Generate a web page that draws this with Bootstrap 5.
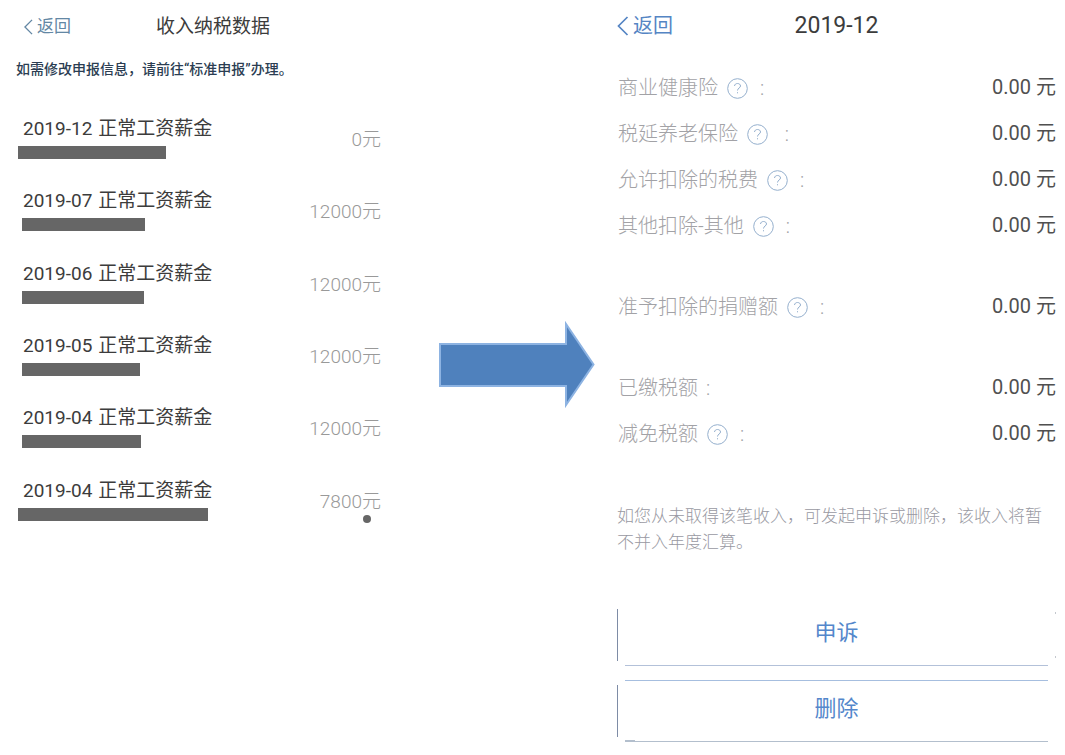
<!DOCTYPE html>
<html lang="zh-CN">
<head>
<meta charset="utf-8">
<meta name="viewport" content="width=device-width, initial-scale=1">
<title>收入纳税数据</title>
<link href="https://cdn.jsdelivr.net/npm/bootstrap@5.3.0/dist/css/bootstrap.min.css" rel="stylesheet">
<script src="https://cdn.jsdelivr.net/npm/bootstrap@5.3.0/dist/js/bootstrap.bundle.min.js" defer></script>
<style>
  body { font-family: Roboto, "Noto Sans CJK SC", sans-serif; color: #3c3c3c; background: #fff; }
  .flow { display: grid; grid-template-columns: minmax(0, 365fr) 236px minmax(0, 439fr); padding: 0 9px 0 16px; }
  .screen-head { height: 54px; }
  .screen-head h1 { font-size: 19px; line-height: 26px; font-weight: 400; }
  .back { display: flex; align-items: center; gap: 4px; text-decoration: none; white-space: nowrap; }
  .back-income { width: 132px; font-size: 17px; color: #6387a4; }
  .back-detail { font-size: 20px; color: #5585c4; }
  .notice { font-size: 14px; line-height: 22px; font-weight: 500; color: #2b3d52; white-space: nowrap; margin-top: 4px; }

  .income { margin-top: 36px; min-height: 436px; font-size: 19px; line-height: 26px; }
  .income .period { display: flex; gap: 6px; padding-left: 7px; }
  .income .amount { color: #999; font-weight: 300; margin-top: 11px; }
  .redacted { height: 13px; margin: 4px 0 0 6px; background: #666; }
  .redacted-wide { margin-left: 2px; }
  .dot { width: 8px; height: 8px; margin-right: 10px; background: #666; }

  .arrow-col { padding: 321px 22px 0 58px; }

  .detail-head { display: grid; grid-template-columns: 1fr auto 1fr; align-items: center; height: 52px; }
  .detail-head h2 { font-size: 23px; line-height: 28px; font-weight: 400; }
  .detail { font-size: 20px; line-height: 28px; margin-top: 13px; }
  .detail > div { height: 46px; }
  .detail dt { color: #a2a2a6; font-weight: 300; padding-left: 1px; }
  .detail dd { color: #505050; padding-bottom: 2px; }
  .section-gap { margin-top: 35px; }
  .help { width: 21px; height: 21px; margin: 0 12px 0 9px; color: #94afcd; }
  .help svg { display: block; }
  .hint { font-size: 17px; line-height: 26px; font-weight: 300; color: #9999a2; margin: 46px 0 49px; }

  .action { height: 62px; padding: 0 0 6px; font-size: 22px; color: #5487cb; background-repeat: no-repeat; }
  .action:hover { color: #36c; }
  .action-appeal {
    background-image: linear-gradient(#7e8ca6, #7e8ca6), linear-gradient(#b3c1d9, #b3c1d9), linear-gradient(#c4c8ce, #c4c8ce), linear-gradient(#c4c8ce, #c4c8ce);
    background-size: 1px 52px, calc(100% - 16px) 1px, 1px 2px, 1px 2px;
    background-position: 0 5px, 8px 100%, 100% 8px, 100% 52px;
  }
  .action-delete {
    margin-top: 14px;
    background-image: linear-gradient(#7e8ca6, #7e8ca6), linear-gradient(#a6bedf, #a6bedf), linear-gradient(#b3bfcd, #b3bfcd), linear-gradient(#b3bfcd, #b3bfcd);
    background-size: 1px 52px, calc(100% - 16px) 1px, calc(100% - 16px) 1px, 10px 2px;
    background-position: 0 5px, 8px 0, 8px 100%, 8px 100%;
  }
</style>
</head>
<body>
<svg class="d-none">
  <symbol id="question" viewBox="0 0 21 21">
    <circle cx="10.500" cy="10.500" r="9.800" fill="none" stroke="currentColor"/>
    <path d="M7.500 8C7.700 6.300 8.900 5.500 10.500 5.500C12.300 5.500 13.500 6.600 13.500 8C13.500 9.900 10.500 10.200 10.500 12.500M10.500 14.200V15.300" fill="none" stroke="currentColor"/>
  </symbol>
</svg>
<main class="flow">
  <section>
    <header class="screen-head d-flex align-items-center ps-1">
      <a href="#" class="back back-income ps-1 flex-shrink-0">
        <svg width="9" height="16" viewBox="0 0 10 18" fill="none" stroke="currentColor" stroke-width="1.500"><path d="M9 1L1 9L9 17"/></svg>返回</a>
      <h1 class="m-0 ps-1 text-nowrap">收入纳税数据</h1>
    </header>
    <p class="notice mb-0">如需修改申报信息，请前往“标准申报”办理。</p>
    <ul class="income list-unstyled d-flex flex-column mb-0">
      <li class="d-flex justify-content-between flex-fill">
        <div><div class="period"><span>2019-12</span> <span>正常工资薪金</span></div><div class="redacted redacted-wide" style="width:148px"></div></div>
        <div class="amount">0元</div>
      </li>
      <li class="d-flex justify-content-between flex-fill">
        <div><div class="period"><span>2019-07</span> <span>正常工资薪金</span></div><div class="redacted" style="width:123px"></div></div>
        <div class="amount">12000元</div>
      </li>
      <li class="d-flex justify-content-between flex-fill">
        <div><div class="period"><span>2019-06</span> <span>正常工资薪金</span></div><div class="redacted" style="width:122px"></div></div>
        <div class="amount">12000元</div>
      </li>
      <li class="d-flex justify-content-between flex-fill">
        <div><div class="period"><span>2019-05</span> <span>正常工资薪金</span></div><div class="redacted" style="width:118px"></div></div>
        <div class="amount">12000元</div>
      </li>
      <li class="d-flex justify-content-between flex-fill">
        <div><div class="period"><span>2019-04</span> <span>正常工资薪金</span></div><div class="redacted" style="width:119px"></div></div>
        <div class="amount">12000元</div>
      </li>
      <li class="d-flex justify-content-between flex-fill">
        <div><div class="period"><span>2019-04</span> <span>正常工资薪金</span></div><div class="redacted redacted-wide" style="width:190px"></div></div>
        <div class="amount">7800元<div class="dot rounded-circle ms-auto"></div></div>
      </li>
    </ul>
  </section>

  <div class="arrow-col">
    <svg class="d-block" width="156" height="88" viewBox="0 0 156 88"><path d="M1 23H127V3L154.500 43.500L127 84V65H1Z" fill="#4f81bd" stroke="#8db3e2" stroke-width="2"/></svg>
  </div>

  <section>
    <header class="detail-head">
      <a href="#" class="back back-detail">
        <svg width="12" height="20" viewBox="0 0 12 20" fill="none" stroke="currentColor" stroke-width="1.700"><path d="M10.500 1L1.500 10L10.500 19"/></svg>返回</a>
      <h2 class="m-0">2019-12</h2>
    </header>
    <dl class="detail mb-0">
      <div class="d-flex align-items-center justify-content-between">
        <dt class="d-flex align-items-center">商业健康险<button type="button" class="btn help p-0 border-0" aria-label="说明"><svg width="21" height="21"><use href="#question"/></svg></button>:</dt>
        <dd class="mb-0">0.00 元</dd>
      </div>
      <div class="d-flex align-items-center justify-content-between">
        <dt class="d-flex align-items-center">税延养老保险<button type="button" class="btn help p-0 border-0" aria-label="说明"><svg width="21" height="21"><use href="#question"/></svg></button>&nbsp;:</dt>
        <dd class="mb-0">0.00 元</dd>
      </div>
      <div class="d-flex align-items-center justify-content-between">
        <dt class="d-flex align-items-center">允许扣除的税费<button type="button" class="btn help p-0 border-0" aria-label="说明"><svg width="21" height="21"><use href="#question"/></svg></button>:</dt>
        <dd class="mb-0">0.00 元</dd>
      </div>
      <div class="d-flex align-items-center justify-content-between">
        <dt class="d-flex align-items-center">其他扣除-其他<button type="button" class="btn help p-0 border-0" aria-label="说明"><svg width="21" height="21"><use href="#question"/></svg></button>:</dt>
        <dd class="mb-0">0.00 元</dd>
      </div>
      <div class="section-gap d-flex align-items-center justify-content-between">
        <dt class="d-flex align-items-center">准予扣除的捐赠额<button type="button" class="btn help p-0 border-0" aria-label="说明"><svg width="21" height="21"><use href="#question"/></svg></button>:</dt>
        <dd class="mb-0">0.00 元</dd>
      </div>
      <div class="section-gap d-flex align-items-center justify-content-between">
        <dt class="d-flex align-items-center gap-2">已缴税额<span>:</span></dt>
        <dd class="mb-0">0.00 元</dd>
      </div>
      <div class="d-flex align-items-center justify-content-between">
        <dt class="d-flex align-items-center">减免税额<button type="button" class="btn help p-0 border-0" aria-label="说明"><svg width="21" height="21"><use href="#question"/></svg></button>:</dt>
        <dd class="mb-0">0.00 元</dd>
      </div>
    </dl>
    <p class="hint">如您从未取得该笔收入，可发起申诉或删除，该收入将暂不并入年度汇算。</p>
    <button type="button" class="btn action action-appeal d-block w-100 border-0 rounded-0">申诉</button>
    <button type="button" class="btn action action-delete d-block w-100 border-0 rounded-0">删除</button>
  </section>
</main>
</body>
</html>
